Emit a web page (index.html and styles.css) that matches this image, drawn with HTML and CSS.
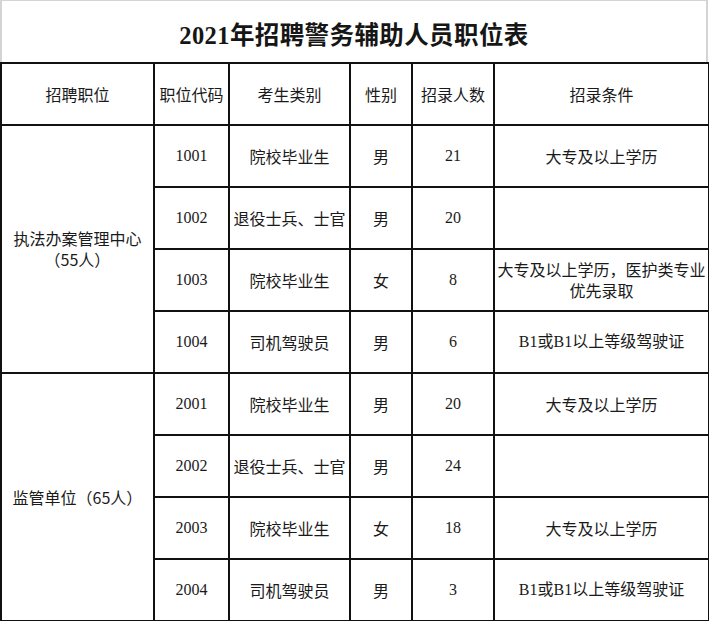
FILE: index.html
```html
<!DOCTYPE html>
<html lang="zh-CN">
<head>
<meta charset="utf-8">
<title>2021年招聘警务辅助人员职位表</title>
<link rel="stylesheet" href="styles.css">
</head>
<body>
<div class="sheet">
  <div class="title">2021年招聘警务辅助人员职位表</div>
  <table class="grid">
    <colgroup>
      <col class="c-pos">
      <col class="c-code">
      <col class="c-type">
      <col class="c-sex">
      <col class="c-num">
      <col class="c-cond">
    </colgroup>
    <thead>
      <tr>
        <th>招聘职位</th>
        <th>职位代码</th>
        <th>考生类别</th>
        <th>性别</th>
        <th>招录人数</th>
        <th>招录条件</th>
      </tr>
    </thead>
    <tbody>
      <tr>
        <td rowspan="4" class="group">执法办案管理中心<br>（55人）</td>
        <td class="num">1001</td>
        <td>院校毕业生</td>
        <td>男</td>
        <td class="num">21</td>
        <td>大专及以上学历</td>
      </tr>
      <tr>
        <td class="num">1002</td>
        <td>退役士兵、士官</td>
        <td>男</td>
        <td class="num">20</td>
        <td></td>
      </tr>
      <tr>
        <td class="num">1003</td>
        <td>院校毕业生</td>
        <td>女</td>
        <td class="num">8</td>
        <td class="wrap">大专及以上学历，医护类专业<br>优先录取</td>
      </tr>
      <tr>
        <td class="num">1004</td>
        <td>司机驾驶员</td>
        <td>男</td>
        <td class="num">6</td>
        <td class="num">B1或B1以上等级驾驶证</td>
      </tr>
      <tr>
        <td rowspan="4" class="group">监管单位（65人）</td>
        <td class="num">2001</td>
        <td>院校毕业生</td>
        <td>男</td>
        <td class="num">20</td>
        <td>大专及以上学历</td>
      </tr>
      <tr>
        <td class="num">2002</td>
        <td>退役士兵、士官</td>
        <td>男</td>
        <td class="num">24</td>
        <td></td>
      </tr>
      <tr>
        <td class="num">2003</td>
        <td>院校毕业生</td>
        <td>女</td>
        <td class="num">18</td>
        <td>大专及以上学历</td>
      </tr>
      <tr>
        <td class="num">2004</td>
        <td>司机驾驶员</td>
        <td>男</td>
        <td class="num">3</td>
        <td class="num">B1或B1以上等级驾驶证</td>
      </tr>
    </tbody>
  </table>
</div>
</body>
</html>
```
FILE: styles.css
```css
html, body {
  margin: 0;
  padding: 0;
  background: #ffffff;
}

.sheet {
  width: 708px;
  font-family: "Noto Sans CJK SC", sans-serif;
  color: #111111;
}

.title {
  box-sizing: border-box;
  height: 62px;
  border-top: 1px solid #d4d4d4;
  border-left: 2px solid #d4d4d4;
  border-right: 2px solid #d4d4d4;
  display: flex;
  align-items: center;
  justify-content: center;
  font-family: "Liberation Serif", "Noto Sans CJK SC", serif;
  font-weight: bold;
  font-size: 24.5px;
  color: #161616;
  padding-top: 4px;
  letter-spacing: 0.4px;
}

.grid {
  width: 708px;
  border-collapse: collapse;
  table-layout: fixed;
}

.c-pos { width: 153px; }
.c-code { width: 75px; }
.c-type { width: 121px; }
.c-sex { width: 62px; }
.c-num { width: 82px; }
.c-cond { width: 215px; }

.grid th,
.grid td {
  border: 2px solid #111111;
  height: 60px;
  padding: 0;
  text-align: center;
  vertical-align: middle;
  font-size: 16px;
  font-weight: normal;
  line-height: 20px;
  white-space: nowrap;
  color: #1a1a1a;
}

.grid .num {
  font-family: "Liberation Serif", "Noto Sans CJK SC", serif;
}

.grid .group {
  line-height: 21px;
}

.grid .wrap {
  line-height: 21px;
}
```
